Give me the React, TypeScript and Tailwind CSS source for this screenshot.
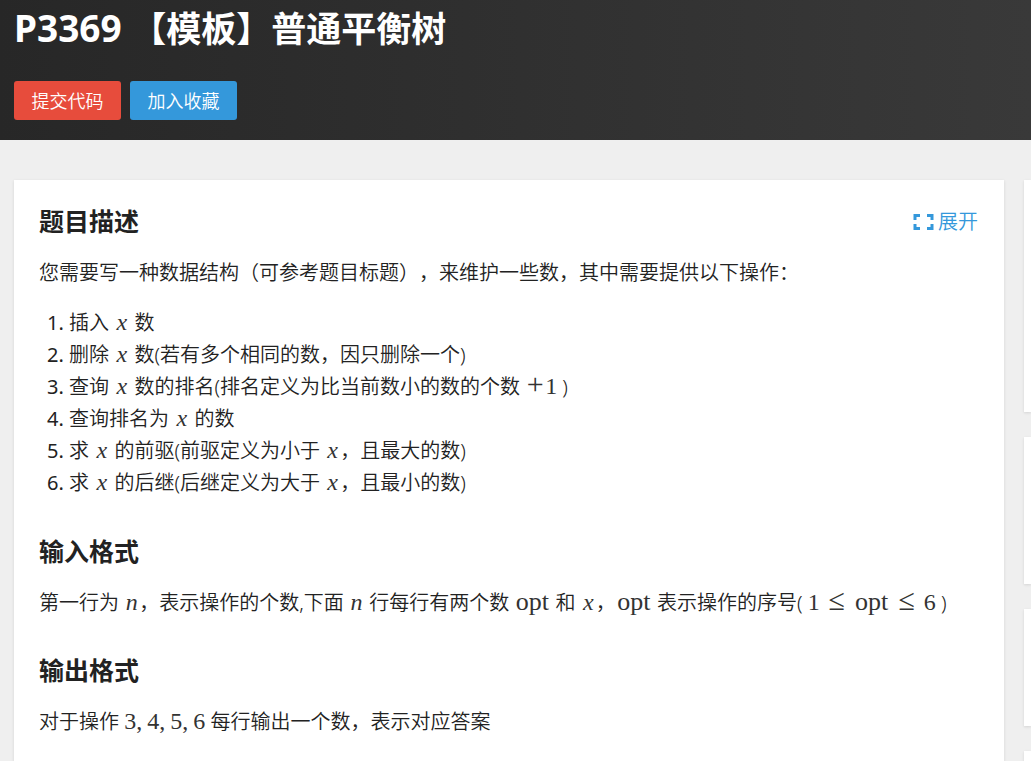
import type { ReactNode } from "react";

function Var({ children }: { children: ReactNode }) {
  return (
    <span className="inline-block w-[15px] text-center font-['Liberation_Serif',serif] text-2xl leading-none font-normal text-[#333] italic">
      {children}
    </span>
  );
}

function Num({ children }: { children: ReactNode }) {
  return <span className="font-['Liberation_Serif',serif] text-2xl leading-none font-normal text-[#333]">{children}</span>;
}

function Opt() {
  return (
    <span className="inline-block w-9 text-center font-['Liberation_Serif',serif] text-[26px] leading-none font-normal text-[#333]">
      opt
    </span>
  );
}

function Rel({ children }: { children: ReactNode }) {
  return (
    <span className="mx-[7px] inline-block w-5 text-center font-['Liberation_Serif',serif] text-[30px] leading-[0] font-normal text-[#333]">
      {children}
    </span>
  );
}

function Heading({ children }: { children: ReactNode }) {
  return <h2 className="text-[25px] leading-[30px] font-bold">{children}</h2>;
}

function ExpandIcon() {
  return (
    <svg viewBox="0 0 21 16" className="h-4 w-[21px]" fill="none" stroke="currentColor" strokeWidth="3" aria-hidden="true">
      <path d="M7 1.5H2V6M2 10V14.5H7M14 1.5H19V6M19 10V14.5H14" />
    </svg>
  );
}

const sideCards = ["h-[232px]", "h-[147px]", "h-[117px]", "flex-1"];

export default function App() {
  return (
    <div
      lang="zh-CN"
      className="flex h-screen flex-col overflow-hidden bg-[#efefef] font-['Noto_Sans','Noto_Sans_CJK_SC',sans-serif] text-xl font-[350] text-[#222] [text-spacing-trim:space-all]"
    >
      <header className="bg-linear-to-r from-[#272727] to-[#393939] px-[14px] pt-[3px] pb-5 text-white">
        <h1 className="mb-7 text-[37px] leading-[50px] font-bold">
          P3369 <span className="text-[35px] leading-[0]">【模板】普通平衡树</span>
        </h1>
        <div className="flex gap-[9px]">
          <button type="button" className="h-[39px] w-[107px] rounded-[3px] bg-[#e74c3c] text-lg">
            提交代码
          </button>
          <button type="button" className="h-[39px] w-[107px] rounded-[3px] bg-[#3498db] text-lg">
            加入收藏
          </button>
        </div>
      </header>

      <div className="flex min-h-0 flex-1 gap-5 pt-10 pl-[14px]">
        <main className="min-w-0 flex-1 bg-white px-[25px] pt-[26px] shadow-[0_1px_3px_rgba(26,26,26,0.12)]">
          <div className="flex items-end justify-between">
            <Heading>题目描述</Heading>
            <a href="#expand" className="flex items-center gap-1 pr-px leading-7 text-[#3498db]">
              <ExpandIcon />
              展开
            </a>
          </div>
          <p className="mt-[21px] leading-8">
            您需要写一种数据结构（可参考题目标题），来维护一些数，其中需要提供以下操作：
          </p>
          <ol className="mt-[18px] list-decimal pb-px pl-[30px] leading-8 marker:font-normal">
            <li>插入 <Var>x</Var> 数</li>
            <li>删除 <Var>x</Var> 数(若有多个相同的数，因只删除一个)</li>
            <li>
              查询 <Var>x</Var> 数的排名(排名定义为比当前数小的数的个数{" "}
              <span className="inline-block w-5 text-center font-['Liberation_Serif',serif] text-[30px] leading-[0] font-normal text-[#333]">
                +
              </span>
              <Num>1</Num> )
            </li>
            <li>查询排名为 <Var>x</Var> 的数</li>
            <li>求 <Var>x</Var> 的前驱(前驱定义为小于 <Var>x</Var>，且最大的数)</li>
            <li>求 <Var>x</Var> 的后继(后继定义为大于 <Var>x</Var>，且最小的数)</li>
          </ol>

          <div className="mt-9">
            <Heading>输入格式</Heading>
          </div>
          <p className="mt-[21px] leading-8">
            第一行为 <Var>n</Var>，表示操作的个数,下面 <Var>n</Var> 行每行有两个数 <Opt /> 和 <Var>x</Var>，<Opt />{" "}
            表示操作的序号( <Num>1</Num>
            <Rel>≤</Rel>
            <Opt />
            <Rel>≤</Rel>
            <Num>6</Num> )
          </p>

          <div className="mt-9">
            <Heading>输出格式</Heading>
          </div>
          <p className="mt-[21px] leading-8">
            对于操作{" "}
            <span className="inline-flex gap-[5px] leading-none">
              <Num>3,</Num>
              <Num>4,</Num>
              <Num>5,</Num>
              <Num>6</Num>
            </span>{" "}
            每行输出一个数，表示对应答案
          </p>
        </main>

        <aside className="flex w-[7px] shrink-0 flex-col gap-[25px]">
          {sideCards.map((height) => (
            <div key={height} className={`${height} bg-white shadow-[0_1px_3px_rgba(26,26,26,0.12)]`} />
          ))}
        </aside>
      </div>
    </div>
  );
}
